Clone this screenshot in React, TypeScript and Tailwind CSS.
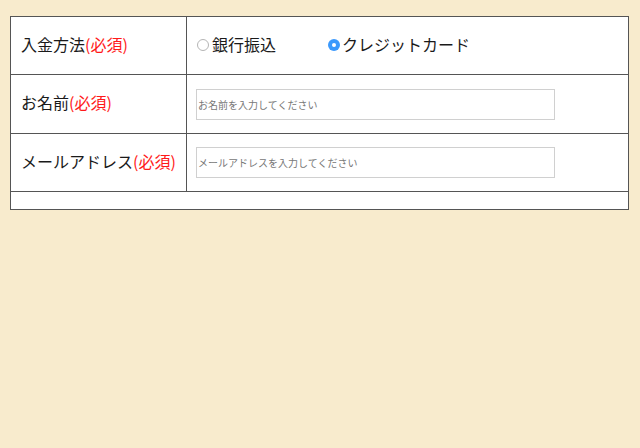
import React from "react";

const font = { fontFamily: '"Noto Sans CJK JP", "Noto Sans", sans-serif' };

function Radio({ checked }: { checked?: boolean }) {
  return checked ? (
    <span className="mt-[3px] inline-flex h-[12px] w-[12px] items-center justify-center rounded-full bg-[#3b99fc]">
      <span className="h-[4px] w-[4px] rounded-full bg-white" />
    </span>
  ) : (
    <span className="mt-[3px] inline-block h-[12px] w-[12px] rounded-full border border-[#b5b5b5] bg-white" />
  );
}

function Label({ text }: { text: string }) {
  return (
    <td className="w-[176px] border border-[#555] pb-[4px] pl-[10px] align-middle text-[16px] text-[#1a1a1a]">
      {text}
      <span className="text-[#ff1a1a]">(必須)</span>
    </td>
  );
}

export default function App() {
  return (
    <div className="min-h-[448px] w-full bg-[#f8ebcd] pt-[16px]" style={font}>
      <table className="ml-[10px] w-[619px] border-collapse border border-[#555] bg-white">
        <tbody>
          <tr className="h-[58px]">
            <Label text="入金方法" />
            <td className="border border-[#555] pb-[4px] pl-[10px] align-middle">
              <div className="flex items-center text-[16px] text-[#1a1a1a]">
                <label className="flex items-center gap-[3px]">
                  <Radio />
                  <span>銀行振込</span>
                </label>
                <label className="ml-[52px] flex items-center gap-[2px]">
                  <Radio checked />
                  <span>クレジットカード</span>
                </label>
              </div>
            </td>
          </tr>
          <tr className="h-[59px]">
            <Label text="お名前" />
            <td className="border border-[#555] pl-[9px] align-middle">
              <input
                className="h-[31px] w-[359px] border border-[#d0d0d0] bg-white px-[1px] text-[10px] outline-none placeholder:text-[#777]"
                style={font}
                placeholder="お名前を入力してください"
              />
            </td>
          </tr>
          <tr className="h-[58px]">
            <Label text="メールアドレス" />
            <td className="border border-[#555] pl-[9px] align-middle">
              <input
                className="h-[31px] w-[359px] border border-[#d0d0d0] bg-white px-[1px] text-[10px] outline-none placeholder:text-[#777]"
                style={font}
                placeholder="メールアドレスを入力してください"
              />
            </td>
          </tr>
          <tr className="h-[18px]">
            <td colSpan={2} className="border border-[#555]" />
          </tr>
        </tbody>
      </table>
    </div>
  );
}
